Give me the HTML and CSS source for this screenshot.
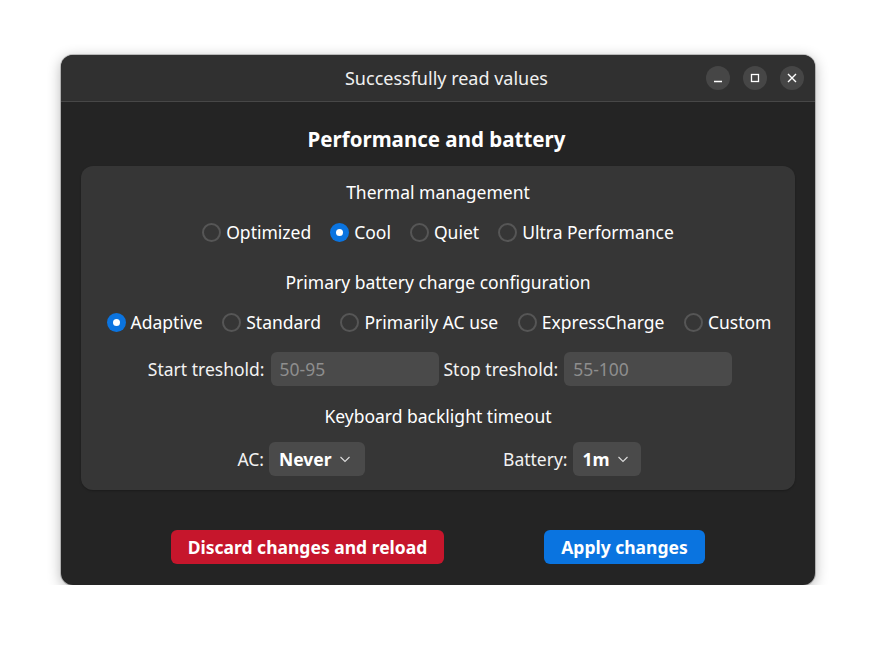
FILE: index.html
```html
<!DOCTYPE html>
<html>
<head>
<meta charset="utf-8">
<link rel="stylesheet" href="styles.css">
</head>
<body>
<div class="window">
  <div class="headerbar">
    <div class="title">Successfully read values</div>
    <div class="controls">
      <span class="wbtn"><svg width="24" height="24" viewBox="0 0 24 24"><path d="M8 15.5h8" stroke="#fff" stroke-width="1.4"/></svg></span>
      <span class="wbtn"><svg width="24" height="24" viewBox="0 0 24 24"><rect x="8.5" y="8.5" width="7" height="7" fill="none" stroke="#fff" stroke-width="1.3"/></svg></span>
      <span class="wbtn"><svg width="24" height="24" viewBox="0 0 24 24"><path d="M8 8l8 8M16 8l-8 8" stroke="#fff" stroke-width="1.4"/></svg></span>
    </div>
  </div>
  <div class="content">
    <h1 class="page-title">Performance and battery</h1>
    <div class="card">
      <div class="section-title first">Thermal management</div>
      <div class="radio-row">
        <label class="radio"><span class="dot"></span>Optimized</label>
        <label class="radio"><span class="dot checked"></span>Cool</label>
        <label class="radio"><span class="dot"></span>Quiet</label>
        <label class="radio"><span class="dot"></span>Ultra Performance</label>
      </div>
      <div class="section-title second">Primary battery charge configuration</div>
      <div class="radio-row wide">
        <label class="radio"><span class="dot checked"></span>Adaptive</label>
        <label class="radio"><span class="dot"></span>Standard</label>
        <label class="radio"><span class="dot"></span>Primarily AC use</label>
        <label class="radio"><span class="dot"></span>ExpressCharge</label>
        <label class="radio"><span class="dot"></span>Custom</label>
      </div>
      <div class="entry-row">
        <span class="lbl">Start treshold:</span>
        <span class="entry">50-95</span>
        <span class="lbl">Stop treshold:</span>
        <span class="entry">55-100</span>
      </div>
      <div class="section-title third">Keyboard backlight timeout</div>
      <div class="drop-row">
        <div class="drop-group"><span class="lbl">AC:</span><span class="dropdown ac">Never<svg width="12" height="12" viewBox="0 0 12 12"><path d="M1.5 4l4.5 4.5 4.5-4.5" fill="none" stroke="#ddd" stroke-width="1.1"/></svg></span></div>
        <div class="drop-group"><span class="lbl">Battery:</span><span class="dropdown bat">1m<svg width="12" height="12" viewBox="0 0 12 12"><path d="M1.5 4l4.5 4.5 4.5-4.5" fill="none" stroke="#ddd" stroke-width="1.1"/></svg></span></div>
      </div>
    </div>
    <div class="actions">
      <button class="btn destructive">Discard changes and reload</button>
      <button class="btn suggested">Apply changes</button>
    </div>
  </div>
</div>
</body>
</html>
```

FILE: styles.css
```css
html, body {
  margin: 0;
  padding: 0;
  background: #ffffff;
  font-family: "Noto Sans", "Open Sans", sans-serif;
  color: #ffffff;
}
body {
  padding-top: 55px;
  display: flex;
  justify-content: center;
}
.window {
  width: 754px;
  height: 530px;
  background: #242424;
  border-radius: 12px;
  box-shadow: 0 3px 14px rgba(0,0,0,0.3), 0 0 0 1px rgba(0,0,0,0.2);
  overflow: hidden;
  display: flex;
  flex-direction: column;
}
.headerbar {
  height: 46px;
  background: #303030;
  border-bottom: 1px solid #474747;
  display: flex;
  align-items: center;
  justify-content: center;
  position: relative;
  flex: none;
}
.title {
  font-size: 18px;
  color: #f0f0f0;
  margin-left: 17px;
  margin-bottom: 1px;
}
.controls {
  position: absolute;
  right: 11px;
  top: 11px;
  display: flex;
  gap: 13px;
}
.wbtn {
  width: 24px;
  height: 24px;
  border-radius: 50%;
  background: #464646;
  display: block;
}
.wbtn svg { display: block; }
.content {
  padding: 0 20px;
  display: flex;
  flex-direction: column;
}
.page-title {
  margin: 22px 0 0;
  height: 30px;
  line-height: 30px;
  font-size: 20.5px;
  font-weight: 700;
  text-align: center;
  padding-right: 3px;
}
.card {
  margin-top: 12px;
  height: 324px;
  box-sizing: border-box;
  background: #363636;
  border-radius: 12px;
  padding-top: 15px;
  display: flex;
  flex-direction: column;
  box-shadow: 0 1px 2px rgba(0,0,0,0.25);
}
.section-title {
  font-size: 17.5px;
  line-height: 22px;
  height: 22px;
  text-align: center;
}
.second { margin-top: 27px; }
.third { margin-top: 19px; }
.radio-row {
  margin-top: 17px;
  height: 24px;
  display: flex;
  justify-content: center;
  gap: 19px;
  font-size: 17.5px;
  line-height: 24px;
}
.radio-row.wide { gap: 19.5px; padding-left: 2px; }
.radio {
  display: flex;
  align-items: center;
  gap: 5px;
  white-space: nowrap;
}
.dot {
  width: 19px;
  height: 19px;
  box-sizing: border-box;
  border-radius: 50%;
  border: 2px solid #565656;
  flex: none;
  position: relative;
}
.dot.checked {
  border: none;
  background: #0b74e0;
}
.dot.checked::after {
  content: "";
  position: absolute;
  left: 6px;
  top: 6px;
  width: 7px;
  height: 7px;
  border-radius: 50%;
  background: #fff;
}
.entry-row {
  margin-top: 18px;
  height: 34px;
  display: flex;
  justify-content: center;
  align-items: center;
  font-size: 17.5px;
  padding-left: 9px;
}
.lbl {
  white-space: nowrap;
  font-size: 17.5px;
  color: #f2f2f2;
}
.entry {
  width: 168px;
  height: 34px;
  box-sizing: border-box;
  background: #4a4a4a;
  border-radius: 6px;
  padding-left: 9px;
  line-height: 34px;
  color: #8e8e8e;
  margin: 0 5px 0 6px;
}
.drop-row {
  margin-top: 15px;
  height: 34px;
  display: flex;
  justify-content: center;
  gap: 138px;
  padding-left: 2px;
}
.drop-group {
  display: flex;
  align-items: center;
  gap: 5px;
}
.dropdown {
  height: 34px;
  box-sizing: border-box;
  background: #4a4a4a;
  border-radius: 6px;
  display: flex;
  align-items: center;
  gap: 7px;
  padding: 0 11px 0 10px;
  font-weight: 700;
  font-size: 17.5px;
}
.dropdown svg { display: block; }
.dropdown.ac { width: 96px; }
.dropdown.bat { width: 68px; }
.actions {
  margin-top: 40px;
  display: flex;
  justify-content: center;
  gap: 100px;
}
.btn {
  height: 34px;
  border: none;
  border-radius: 6px;
  font-family: "Noto Sans", "Open Sans", sans-serif;
  font-weight: 700;
  font-size: 17.5px;
  color: #fff;
  padding: 0;
  white-space: nowrap;
}
.destructive { background: #c6162c; width: 273px; }
.suggested { background: #0a74e0; width: 161px; }
```
